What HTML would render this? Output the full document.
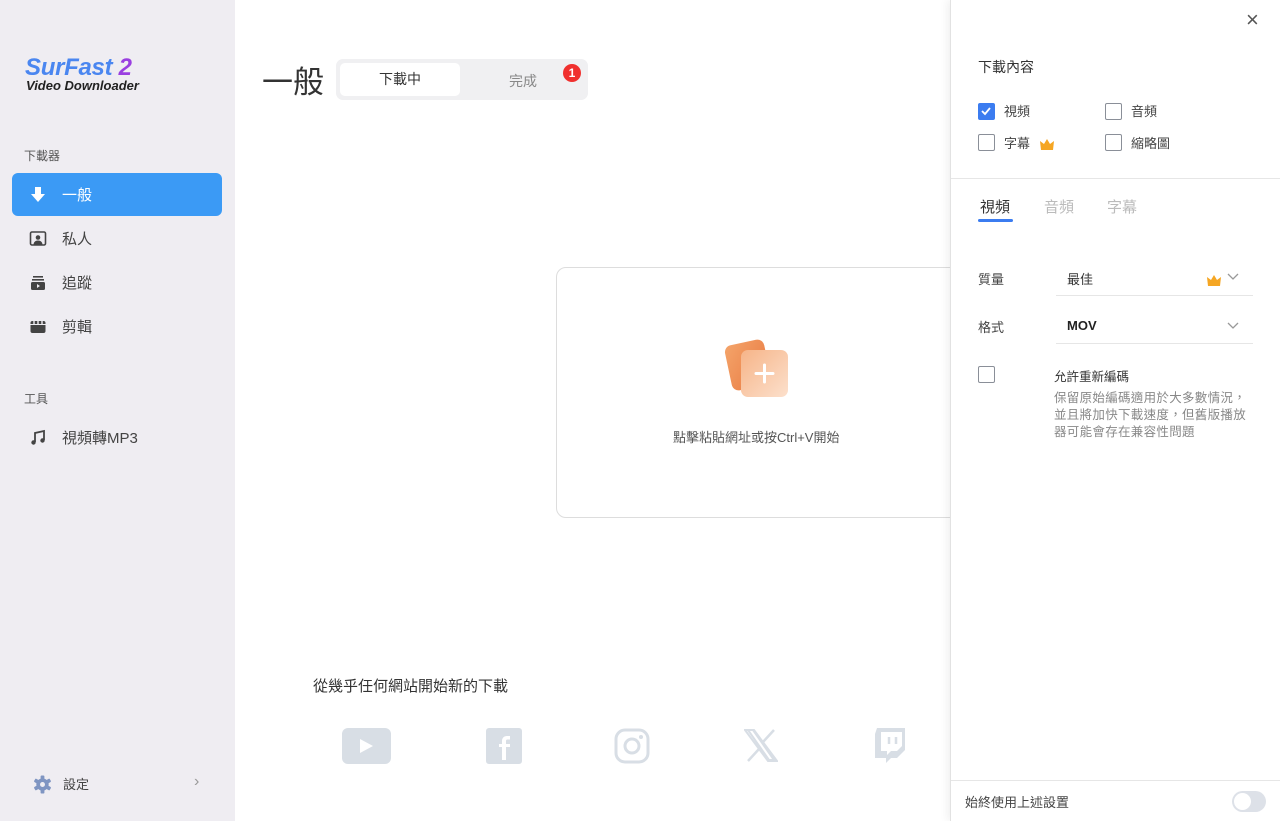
<!DOCTYPE html>
<html><head><meta charset="utf-8"><style>
*{box-sizing:border-box;margin:0;padding:0}
body{width:1280px;height:821px;overflow:hidden;position:relative;background:#fff;font-family:"Liberation Sans","Noto Sans CJK TC",sans-serif;color:#333}
.side{position:absolute;left:0;top:0;width:235px;height:821px;background:#efedf2}
.abs{position:absolute}
.logo1{left:25px;top:54px;font-size:24px;font-weight:900;font-style:italic;color:#4a86f0;letter-spacing:-0.3px}
.logo1 span{color:#9a3fe0}
.logo2{left:26px;top:78px;font-size:13px;font-weight:bold;font-style:italic;color:#222}
.sec{font-size:12px;color:#555}
.item{position:absolute;left:12px;width:210px;height:43px;border-radius:6px;font-size:15px;color:#444;display:flex;align-items:center;padding-left:50px}
.item.on{background:#3b9af5;color:#fff}
.item svg{position:absolute;left:17px;top:13px}
.card{left:556px;top:267px;width:420px;height:251px;border:1px solid #ddd;border-radius:10px}
.panel{left:950px;top:0;width:330px;height:821px;background:#fff;border-left:1px solid #e2e2e2;box-shadow:-3px 0 8px rgba(0,0,0,0.06)}
.cb{position:absolute;width:17px;height:17px;border:1.5px solid #8a8f98;border-radius:2px;background:#fff}
.cb.on{background:#3b7cf0;border-color:#3b7cf0}
.t13{font-size:13px;color:#444}
.line{position:absolute;height:1px;background:#e6e6e6}
</style></head><body>
<div class="side">
<div class="abs logo1">SurFast <span>2</span></div>
<div class="abs logo2">Video Downloader</div>
<div class="abs sec" style="left:24px;top:147px">下載器</div>
<div class="item on" style="top:173px"><svg width="18" height="18" viewBox="0 0 18 18"><path d="M6 1h6v7h4l-7 8-7-8h4z" fill="#fff"/></svg>一般</div>
<div class="item" style="top:217px"><svg width="18" height="18" viewBox="0 0 18 18"><rect x="1.5" y="2" width="15" height="13" rx="1.5" fill="none" stroke="#444" stroke-width="1.6"/><circle cx="9" cy="7.5" r="2.3" fill="#444"/><path d="M4.5 15c0-3 2-4.5 4.5-4.5s4.5 1.5 4.5 4.5z" fill="#444"/></svg>私人</div>
<div class="item" style="top:261px"><svg width="18" height="18" viewBox="0 0 18 18"><rect x="4" y="2" width="10" height="1.6" fill="#444"/><rect x="3" y="5" width="12" height="1.6" fill="#444"/><rect x="2" y="8" width="14" height="8" rx="1.5" fill="#444"/><path d="M8 10v4l3-2z" fill="#efedf2"/></svg>追蹤</div>
<div class="item" style="top:305px"><svg width="18" height="18" viewBox="0 0 18 18"><rect x="1.5" y="3" width="15" height="12" rx="2" fill="#444"/><path d="M5 3v3M9 3v3M13 3v3" stroke="#efedf2" stroke-width="1.4"/><rect x="1.5" y="6" width="15" height="1" fill="#efedf2"/></svg>剪輯</div>
<div class="abs sec" style="left:24px;top:390px">工具</div>
<div class="item" style="top:416px"><svg width="18" height="18" viewBox="0 0 18 18"><path d="M6 13V4l9-2v9" fill="none" stroke="#444" stroke-width="1.8"/><circle cx="4.5" cy="13.5" r="2.2" fill="#444"/><circle cx="13.5" cy="11.5" r="2.2" fill="#444"/></svg>視頻轉MP3</div>
<svg class="abs" style="left:33px;top:775px" width="19" height="19" viewBox="0 0 20 20"><g fill="#7f95c2"><circle cx="10" cy="10" r="6.5"/><rect x="8" y="0.5" width="4" height="19" rx="1"/><rect x="8" y="0.5" width="4" height="19" rx="1" transform="rotate(60 10 10)"/><rect x="8" y="0.5" width="4" height="19" rx="1" transform="rotate(120 10 10)"/></g><circle cx="10" cy="10" r="2.6" fill="#efedf2"/></svg>
<div class="abs t13" style="left:63px;top:774px;color:#444">設定</div>
<div class="abs" style="left:194px;top:773px;color:#999;font-size:16px">›</div>
</div>

<div class="abs" style="left:262px;top:57px;font-size:31px;color:#333">一般</div>
<div class="abs" style="left:336px;top:59px;width:252px;height:41px;background:#f0f0f2;border-radius:7px"></div>
<div class="abs" style="left:340px;top:63px;width:120px;height:33px;background:#fff;border-radius:5px;font-size:14px;text-align:center;line-height:33px;color:#333">下載中</div>
<div class="abs" style="left:509px;top:71px;font-size:14px;color:#888">完成</div>
<div class="abs" style="left:563px;top:64px;width:18px;height:18px;border-radius:50%;background:#f0302e;color:#fff;font-size:12px;font-weight:bold;text-align:center;line-height:18px">1</div>

<div class="abs card"></div>
<svg class="abs" style="left:722px;top:338px" width="70" height="64" viewBox="0 0 70 64"><defs><linearGradient id="g1" x1="0" y1="0" x2="1" y2="1"><stop offset="0" stop-color="#f4a46a"/><stop offset="1" stop-color="#e8773f"/></linearGradient><linearGradient id="g2" x1="0" y1="0" x2="1" y2="1"><stop offset="0" stop-color="#f6b488"/><stop offset="1" stop-color="#fce0cc"/></linearGradient></defs><rect x="6" y="4" width="40" height="46" rx="7" fill="url(#g1)" transform="rotate(-12 26 27)"/><rect x="19" y="12" width="47" height="47" rx="7" fill="url(#g2)"/><path d="M42.5 27v17M34 35.5h17" stroke="#fff" stroke-width="3" stroke-linecap="round"/></svg>
<div class="abs t13" style="left:673px;top:427px;color:#555">點擊粘貼網址或按Ctrl+V開始</div>

<div class="abs" style="left:313px;top:675px;font-size:15px;color:#333">從幾乎任何網站開始新的下載</div>
<svg class="abs" style="left:342px;top:728px" width="49" height="36" viewBox="0 0 49 36"><rect width="49" height="36" rx="6" fill="#d8dee5"/><path d="M18 11v14l13-7z" fill="#fff"/></svg>
<svg class="abs" style="left:486px;top:728px" width="36" height="36" viewBox="0 0 36 36"><rect width="36" height="36" rx="3" fill="#d8dee5"/><path d="M20 32V19h4v-3h-4v-3c0-1 .5-1.5 1.5-1.5H24V8h-3c-3 0-5 2-5 5v3h-3v3h3v13z" fill="#fff"/></svg>
<svg class="abs" style="left:614px;top:728px" width="36" height="36" viewBox="0 0 36 36"><rect x="2" y="2" width="32" height="32" rx="9" fill="none" stroke="#d8dee5" stroke-width="3"/><circle cx="18" cy="18" r="7" fill="none" stroke="#d8dee5" stroke-width="3"/><circle cx="27" cy="9" r="2" fill="#d8dee5"/></svg>
<svg class="abs" style="left:744px;top:729px" width="34" height="33" viewBox="0 0 34 33"><path d="M1 1h9l23 31h-9zM4 1h5l21 30h-5z" fill="none" stroke="#d8dee5" stroke-width="2"/><path d="M30 1L19 13M4 32l11-12" stroke="#d8dee5" stroke-width="2.5"/></svg>
<svg class="abs" style="left:873px;top:728px" width="34" height="37" viewBox="0 0 34 37"><path d="M4 0h28v22l-8 8h-6l-5 5v-5H2V6z" fill="#d8dee5"/><path d="M8 4v19h6v4l4-4h6l5-5V4z" fill="#fff"/><path d="M16 9v7M23 9v7" stroke="#d8dee5" stroke-width="2.5"/></svg>

<div class="abs panel">
<div class="abs" style="left:295px;top:7px;font-size:22px;color:#555;font-weight:300">×</div>
<div class="abs" style="left:27px;top:57px;font-size:14px;color:#333">下載內容</div>
<div class="cb on" style="left:27px;top:103px"><svg width="14" height="14" viewBox="0 0 14 14" style="position:absolute;left:0;top:0"><path d="M3 7l3 3 5-6" fill="none" stroke="#fff" stroke-width="1.8"/></svg></div>
<div class="abs t13" style="left:53px;top:101px">視頻</div>
<div class="cb" style="left:154px;top:103px"></div>
<div class="abs t13" style="left:180px;top:101px">音頻</div>
<div class="cb" style="left:27px;top:134px"></div>
<div class="abs t13" style="left:53px;top:133px">字幕</div>
<svg class="abs" style="left:88px;top:138px" width="16" height="12" viewBox="0 0 16 12"><path d="M1 3l4 3 3-5 3 5 4-3-1 9H2z" fill="#f5a623"/></svg>
<div class="cb" style="left:154px;top:134px"></div>
<div class="abs t13" style="left:180px;top:133px">縮略圖</div>
<div class="line" style="left:0;top:178px;width:330px"></div>
<div class="abs" style="left:29px;top:196px;font-size:15px;color:#333">視頻</div>
<div class="abs" style="left:27px;top:219px;width:35px;height:3px;background:#3b7cf0;border-radius:2px"></div>
<div class="abs" style="left:93px;top:196px;font-size:15px;color:#bbb">音頻</div>
<div class="abs" style="left:156px;top:196px;font-size:15px;color:#bbb">字幕</div>
<div class="abs t13" style="left:27px;top:269px">質量</div>
<div class="abs t13" style="left:116px;top:269px;color:#333">最佳</div>
<svg class="abs" style="left:255px;top:274px" width="16" height="12" viewBox="0 0 16 12"><path d="M1 3l4 3 3-5 3 5 4-3-1 9H2z" fill="#f5a623"/></svg>
<svg class="abs" style="left:276px;top:273px" width="12" height="8" viewBox="0 0 12 8"><path d="M1 1l5 5 5-5" fill="none" stroke="#999" stroke-width="1.3"/></svg>
<div class="line" style="left:105px;top:295px;width:197px"></div>
<div class="abs t13" style="left:27px;top:317px">格式</div>
<div class="abs t13" style="left:116px;top:318px;color:#222;font-weight:bold">MOV</div>
<svg class="abs" style="left:276px;top:322px" width="12" height="8" viewBox="0 0 12 8"><path d="M1 1l5 5 5-5" fill="none" stroke="#999" stroke-width="1.3"/></svg>
<div class="line" style="left:105px;top:343px;width:197px"></div>
<div class="cb" style="left:27px;top:366px"></div>
<div class="abs" style="left:103px;top:366px;font-size:12.5px;color:#333">允許重新編碼</div>
<div class="abs" style="left:103px;top:390px;font-size:12.5px;color:#888;line-height:17px;width:195px;letter-spacing:0.3px">保留原始編碼適用於大多數情況，並且將加快下載速度，但舊版播放器可能會存在兼容性問題</div>
<div class="line" style="left:0;top:780px;width:330px"></div>
<div class="abs t13" style="left:14px;top:792px">始終使用上述設置</div>
<div class="abs" style="left:281px;top:791px;width:34px;height:21px;border-radius:11px;background:#dde1e8"><div style="position:absolute;left:2px;top:2px;width:17px;height:17px;border-radius:50%;background:#fff"></div></div>
</div>
</body></html>
